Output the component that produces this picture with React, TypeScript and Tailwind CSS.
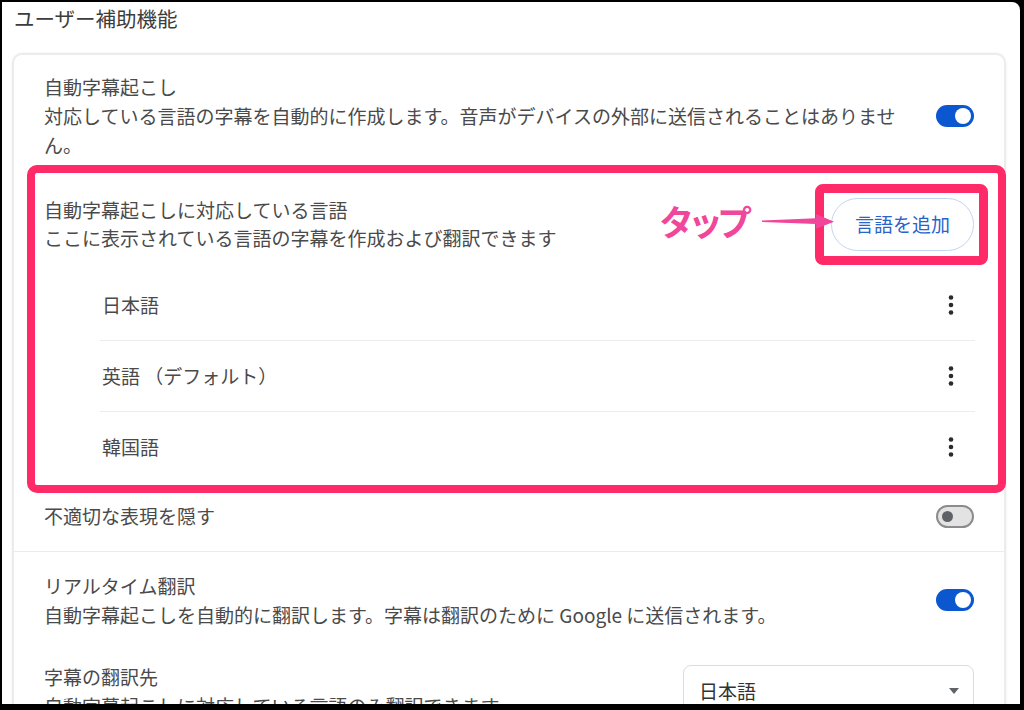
import React from 'react';

const font = { fontFamily: '"Noto Sans CJK JP", "Noto Sans", sans-serif' };

function ToggleOn() {
  return (
    <div className="relative w-[38px] h-[22px] shrink-0 rounded-full bg-[#0b57d0]">
      <div className="absolute right-[3px] top-[3px] w-[16px] h-[16px] rounded-full bg-white" />
    </div>
  );
}

function ToggleOff() {
  return (
    <div className="flex items-center w-[38px] h-[23px] shrink-0 rounded-full border-2 border-[#8a8d8c] bg-[#e3e3e3] pl-[4px]">
      <div className="w-[11px] h-[11px] rounded-full bg-[#5f6368]" />
    </div>
  );
}

function Kebab() {
  return (
    <svg width="6" height="22" viewBox="0 0 6 22" className="shrink-0">
      <circle cx="3" cy="3.5" r="2.3" fill="#2b2b2b" />
      <circle cx="3" cy="11" r="2.3" fill="#2b2b2b" />
      <circle cx="3" cy="18.5" r="2.3" fill="#2b2b2b" />
    </svg>
  );
}

export default function App() {
  const languages = ['日本語', '英語 （デフォルト）', '韓国語'];

  return (
    <div className="w-[1024px] h-[710px] bg-black pt-[2px] pl-[2px] pr-[4px] pb-[6px] overflow-hidden" style={font}>
      <div className="h-full bg-white rounded-tr-[8px] overflow-hidden text-[#4a4a4a]">
        {/* Page title */}
        <div className="h-[51px] pt-[1px] pl-[12px] text-[20.5px] leading-[30px] text-[#3c3c3c]">
          ユーザー補助機能
        </div>

        {/* Settings card */}
        <div className="ml-[10px] w-[994px] rounded-[10px] border-2 border-[#ececec] shadow-[0_0_2px_rgba(0,0,0,0.1)] text-[19px]">
          {/* Live caption */}
          <div className="flex items-center justify-between px-[30px] pt-[17px]">
            <div className="w-[862px] leading-[29px]">
              <div>自動字幕起こし</div>
              <div>対応している言語の字幕を自動的に作成します。音声がデバイスの外部に送信されることはありません。</div>
            </div>
            <ToggleOn />
          </div>

          {/* Languages section (highlighted) */}
          <div className="relative px-[30px]">
            <div className="flex items-center justify-between pt-[37px]">
              <div className="leading-[28px]">
                <div>自動字幕起こしに対応している言語</div>
                <div>ここに表示されている言語の字幕を作成および翻訳できます</div>
              </div>
              <div className="flex items-center">
                <span className="text-[35px] font-bold leading-none tracking-[-6px] text-[#f0479b] mt-[-8px]">タップ</span>
                <svg width="73" height="20" viewBox="0 0 73 20" className="relative z-10 ml-[16px] mr-[-4px] mt-[-6px]">
                  <polygon points="0,9.6 54,7.2 54,3 72,10.8 54,17.8 54,13 0,11" fill="#f0479b" />
                </svg>
                <div className="relative">
                  <button className="w-[143px] h-[53px] rounded-full border border-[#c2d5f4] bg-white text-[#2a64c9] text-[19px]">
                    言語を追加
                  </button>
                  <div className="absolute -top-[14px] -bottom-[14px] -left-[16px] -right-[14px] rounded-[8px] border-[9px] border-[#ff2a68] pointer-events-none" />
                </div>
              </div>
            </div>

            <div className="ml-[56px] mr-[-1px] mt-[18px]">
              {languages.map((lang, i) => (
                <div
                  key={lang}
                  className={`flex items-center justify-between pl-[2px] pr-[21px] ${i > 0 ? 'border-t border-[#ececec] h-[71px]' : 'h-[70px]'}`}
                >
                  <span>{lang}</span>
                  <Kebab />
                </div>
              ))}
            </div>

            {/* Highlight frame */}
            <div className="absolute top-[6px] -bottom-[11px] left-[13px] -right-[2px] rounded-[10px] border-[8px] border-[#ff2a68] pointer-events-none" />
          </div>

          {/* Profanity filter */}
          <div className="flex items-center justify-between h-[70px] px-[30px] border-b border-[#ececec]">
            <span>不適切な表現を隠す</span>
            <ToggleOff />
          </div>

          {/* Live translate */}
          <div className="flex items-center justify-between px-[30px] pt-[19px]">
            <div className="leading-[29px]">
              <div>リアルタイム翻訳</div>
              <div>自動字幕起こしを自動的に翻訳します。字幕は翻訳のために Google に送信されます。</div>
            </div>
            <ToggleOn />
          </div>

          {/* Translate target */}
          <div className="flex items-center justify-between px-[30px] pt-[33px] pb-[20px]">
            <div className="leading-[29px]">
              <div>字幕の翻訳先</div>
              <div>自動字幕起こしに対応している言語のみ翻訳できます</div>
            </div>
            <div className="flex items-center justify-between w-[291px] h-[52px] rounded-[8px] border border-[#dadce0] pl-[15px] pr-[14px] text-[#333]">
              <span>日本語</span>
              <svg width="10" height="6" viewBox="0 0 10 6">
                <polygon points="0,0 10,0 5,6" fill="#5f6368" />
              </svg>
            </div>
          </div>
        </div>
      </div>
    </div>
  );
}
